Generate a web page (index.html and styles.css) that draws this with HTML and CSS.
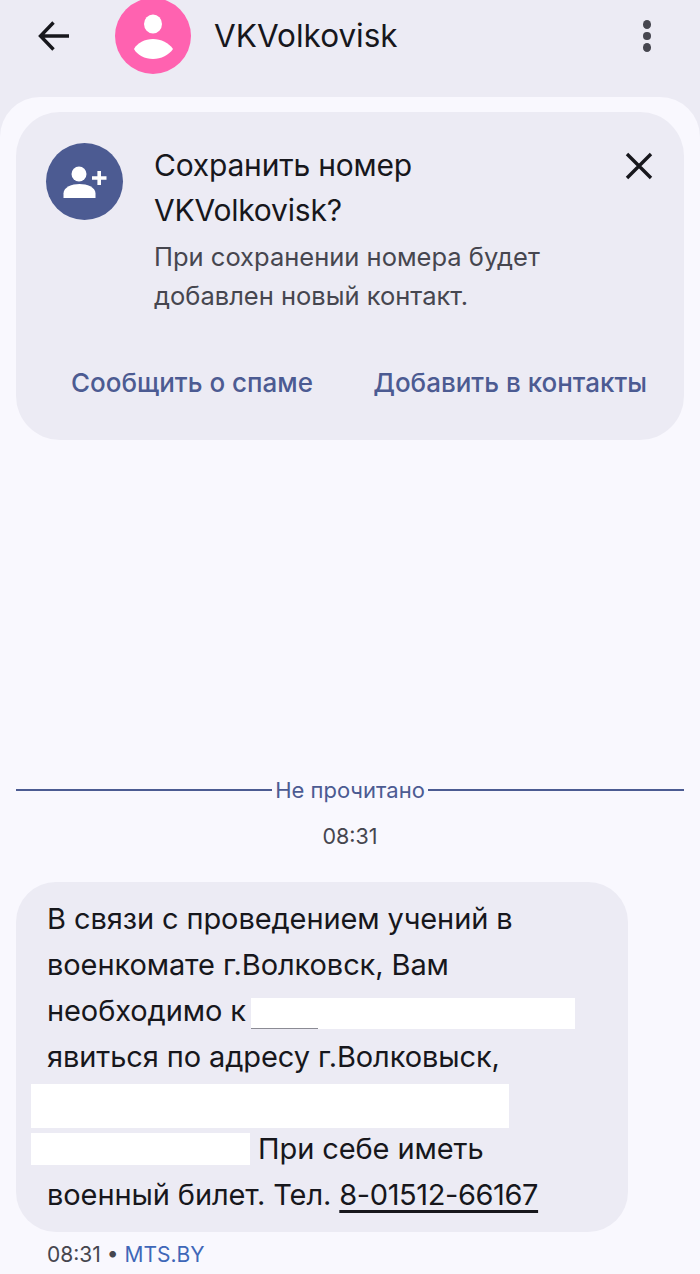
FILE: index.html
```html
<!DOCTYPE html>
<html lang="en">
<head>
  <meta charset="UTF-8" />
  <meta name="viewport" content="width=device-width, initial-scale=1.0"/>
  <title>VKVolkovisk</title>
  <link rel="stylesheet" href="styles.css">
</head>
<body>
  <div class="header">
    <button class="icon-button back-button" aria-label="Назад">
      <svg width="36" height="36" viewBox="0 0 36 36"><path d="M33 18H5M17.500 4.500L4.500 18 17.500 31.500" fill="none" stroke="#17171c" stroke-width="3.400"/></svg>
    </button>
    <div class="avatar">
      <svg width="76" height="76" viewBox="0 0 76 76"><ellipse cx="38" cy="26" rx="9" ry="9.500" fill="#fff"/><path d="M19 51C22 45 30 41 38 41S54 45 58 51C54 57 46 61 38 61S22 57 19 51Z" fill="#fff"/></svg>
    </div>
    <div class="title">VKVolkovisk</div>
    <button class="icon-button more-button" aria-label="Ещё">
      <span class="dot"></span><span class="dot"></span><span class="dot"></span>
    </button>
  </div>

  <div class="sheet">
    <div class="card">
      <div class="card-top">
        <div class="add-icon">
          <svg width="46" height="40" viewBox="0 0 46 40"><ellipse cx="17" cy="12" rx="7.500" ry="7.500" fill="#fff"/><path d="M1.500 36V31.500C1.500 25 10 22 17.500 22S33.500 25 33.500 31.500V36Z" fill="#fff"/><path d="M30 16H44.500M37.200 9V23" stroke="#fff" stroke-width="3.600"/></svg>
        </div>
        <div class="card-text">
          <div class="card-title">Сохранить номер<br>VKVolkovisk?</div>
          <div class="card-desc">При сохранении номера будет<br>добавлен новый контакт.</div>
        </div>
        <button class="icon-button close-button" aria-label="Закрыть">
          <svg width="30" height="30" viewBox="0 0 30 30"><path d="M3 3L27 27M27 3L3 27" stroke="#17171c" stroke-width="3.400"/></svg>
        </button>
      </div>
      <div class="card-actions">
        <span class="action">Сообщить о спаме</span>
        <span class="action">Добавить в контакты</span>
      </div>
    </div>

    <div class="unread">
      <span class="unread-line"></span>
      <span class="unread-label">Не прочитано</span>
      <span class="unread-line"></span>
    </div>
    <div class="time">08:31</div>

    <div class="bubble">
      <div class="line">В связи с проведением учений в</div>
      <div class="line">военкомате г.Волковск, Вам</div>
      <div class="line">необходимо к <span class="hidden hidden-date"></span></div>
      <div class="line">явиться по адресу г.Волковыск,</div>
      <div class="line"><span class="hidden hidden-address"></span></div>
      <div class="line"><span class="hidden hidden-room"></span> При себе иметь</div>
      <div class="line">военный билет. Тел. <a class="phone" href="#">8-01512-66167</a></div>
    </div>
    <div class="meta">08:31 • <span class="sender">MTS.BY</span></div>
  </div>
</body>
</html>
```

FILE: styles.css
```css
:root {
  --page-color: #ecebf4;
  --sheet-color: #f9f8fe;
  --accent-color: #4c5b92;
  --text-color: #17171c;
  --muted-color: #46464f;
}

* {
  box-sizing: border-box;
  margin: 0;
  padding: 0;
  font-family: Inter, Roboto, 'Liberation Sans', sans-serif;
}

body {
  width: 700px;
  height: 1274px;
  overflow: hidden;
  background: var(--page-color);
  color: var(--text-color);
}

button {
  background: none;
  border: none;
}

.header {
  height: 97px;
  display: flex;
  align-items: flex-start;
  padding: 18px 49px 0 36px;
}

.icon-button {
  display: flex;
  align-items: center;
  justify-content: center;
}

.back-button {
  width: 36px;
  height: 36px;
}

.avatar {
  width: 76px;
  height: 76px;
  margin: -20px 0 0 43px;
  border-radius: 50%;
  background: #ff62b0;
  flex-shrink: 0;
}

.title {
  margin-left: 23px;
  font-size: 31.500px;
  line-height: 36px;
  flex: 1;
}

.more-button {
  flex-direction: column;
  gap: 3px;
  width: 8px;
  height: 36px;
}

.dot {
  width: 8px;
  height: 8.500px;
  border-radius: 50%;
  background: var(--muted-color);
}

.sheet {
  height: 1177px;
  padding: 15px 16px 0;
  background: var(--sheet-color);
  border-radius: 40px 40px 0 0;
}

/* Save number card */
.card {
  height: 328px;
  background: var(--page-color);
  border-radius: 44px;
  padding: 31px 30px 0;
}

.card-top {
  display: flex;
  align-items: flex-start;
  height: 220px;
}

.add-icon {
  width: 77px;
  height: 77px;
  border-radius: 50%;
  background: var(--accent-color);
  display: flex;
  align-items: center;
  justify-content: center;
  flex-shrink: 0;
}

.card-text {
  flex: 1;
  margin-left: 31px;
}

.card-title {
  font-size: 30px;
  line-height: 45px;
  letter-spacing: -0.200px;
}

.card-desc {
  margin-top: 4px;
  font-size: 25.500px;
  line-height: 39px;
  color: var(--muted-color);
}

.close-button {
  width: 30px;
  height: 30px;
  margin: 8px 0 0;
}

.card-actions {
  display: flex;
  justify-content: space-between;
  padding: 0 7px 0 25px;
}

.action {
  font-size: 26px;
  font-weight: 500;
  line-height: 40px;
  color: var(--accent-color);
}

/* Unread divider */
.unread {
  margin-top: 330px;
  display: flex;
  align-items: center;
  gap: 3px;
  height: 40px;
}

.unread-line {
  flex: 1;
  height: 2px;
  background: var(--accent-color);
}

.unread-label {
  font-size: 22px;
  color: var(--accent-color);
}

.time {
  margin-top: 11px;
  text-align: center;
  font-size: 21.500px;
  line-height: 30px;
  color: var(--muted-color);
}

/* Message */
.bubble {
  width: 612px;
  height: 350px;
  margin-top: 31px;
  padding: 14px 31px;
  background: var(--page-color);
  border-radius: 40px;
}

.line {
  height: 46px;
  font-size: 29px;
  line-height: 46px;
  letter-spacing: -0.100px;
  white-space: nowrap;
}

.hidden {
  display: inline-block;
  vertical-align: top;
  background: #fff;
}

.hidden-date {
  width: 324px;
  height: 31px;
  margin: 10px 0 0 -3px;
  background: linear-gradient(to right, #8b8b94 67px, transparent 67px) bottom left / 100% 1px no-repeat, #fff;
}

.hidden-address {
  width: 478px;
  height: 44px;
  margin: 4px 0 0 -16px;
}

.hidden-room {
  width: 219px;
  height: 32px;
  margin: 7px 0 0 -16px;
}

.phone {
  color: inherit;
  letter-spacing: -0.400px;
  text-decoration: underline;
  text-decoration-thickness: 2.500px;
  text-underline-offset: 5px;
  text-decoration-skip-ink: none;
}

.meta {
  margin: 8px 0 0 31px;
  font-size: 21px;
  line-height: 30px;
  color: var(--muted-color);
}

.sender {
  color: #3f67b8;
}
```
